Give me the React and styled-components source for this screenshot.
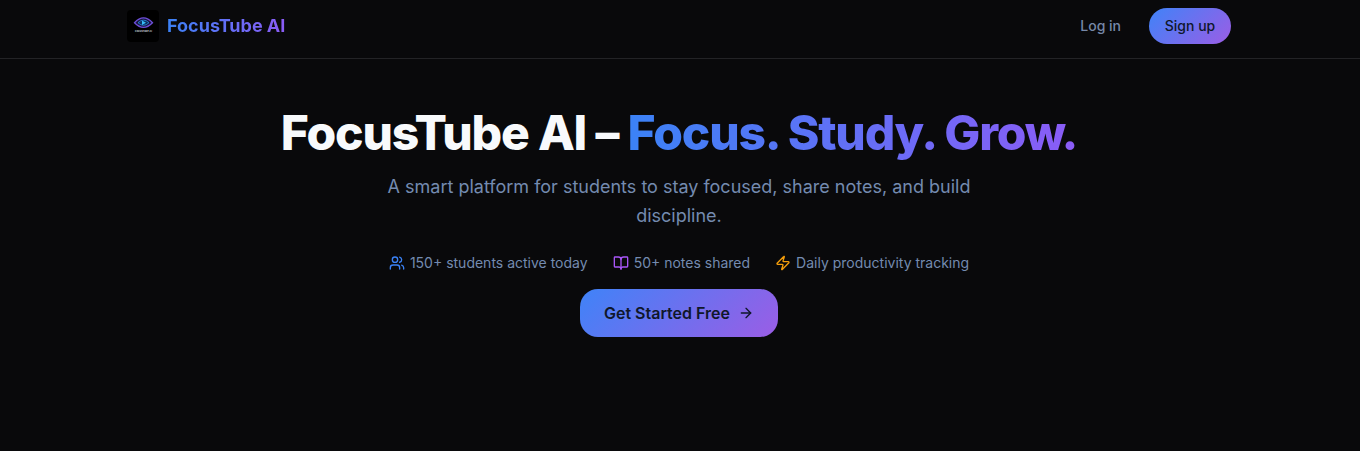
import styled, { createGlobalStyle } from "styled-components";
import { ArrowRight, BookOpen, Users, Zap } from "lucide-react";

const GRADIENT = "linear-gradient(135deg, #3f83f8, #9b5de5)";

const GlobalStyle = createGlobalStyle`
  * {
    box-sizing: border-box;
  }

  body {
    margin: 0;
    background: #09090b;
    font-family: "Inter", "Liberation Sans", sans-serif;
    color: #f8fafc;
  }
`;

const Page = styled.div`
  min-height: 451px;
  background: #09090b;
`;

const Navbar = styled.header`
  height: 59px;
  padding: 0 129px 7px 127px;
  display: flex;
  align-items: center;
  justify-content: space-between;
  border-bottom: 1px solid #232326;
`;

const Brand = styled.div`
  display: flex;
  align-items: center;
  gap: 8px;
`;

const LogoBox = styled.div`
  width: 32px;
  height: 32px;
  border-radius: 4px;
  background: #000;
  display: flex;
`;

const BrandName = styled.span`
  font-size: 18px;
  font-weight: 700;
  background: linear-gradient(90deg, #3b82f6, #8b5cf6);
  -webkit-background-clip: text;
  background-clip: text;
  color: transparent;
`;

const NavActions = styled.nav`
  display: flex;
  align-items: center;
  gap: 16px;
`;

const LoginButton = styled.button`
  height: 36px;
  padding: 0 12px 0 13px;
  border: 0;
  background: transparent;
  font: 500 14px "Inter", sans-serif;
  color: #7688a8;
`;

const SignupButton = styled.button`
  width: 82px;
  height: 36px;
  border: 0;
  border-radius: 18px;
  background: ${GRADIENT};
  font: 500 14px "Inter", sans-serif;
  color: #0f172a;
`;

const Hero = styled.main`
  display: flex;
  flex-direction: column;
  align-items: center;
  padding: 44px 2px 0 0;
`;

const Title = styled.h1`
  margin: 0;
  font-size: 48px;
  line-height: 60px;
  font-weight: 800;
  letter-spacing: -1.2px;
  text-align: center;
  color: #f8fafc;
`;

const TitleAccent = styled.span`
  background: linear-gradient(90deg, #3b82f6, #8b5cf6);
  -webkit-background-clip: text;
  background-clip: text;
  color: transparent;
`;

const Subtitle = styled.p`
  width: 640px;
  margin: 9px 0 0;
  font-size: 18px;
  line-height: 29px;
  text-align: center;
  color: #748bb0;
`;

const Stats = styled.ul`
  margin: 23px 0 0;
  padding: 0;
  list-style: none;
  display: flex;
  gap: 25px;
`;

const Stat = styled.li`
  display: flex;
  align-items: center;
  gap: 5px;
  font-size: 14px;
  line-height: 20px;
  color: #748bb0;
  svg {
    color: ${(props) => props.$iconColor};
  }
`;

const CtaButton = styled.button`
  margin-top: 16px;
  width: 198px;
  height: 48px;
  border: 0;
  border-radius: 18px;
  display: flex;
  align-items: center;
  justify-content: center;
  gap: 8px;
  background: ${GRADIENT};
  font: 600 16px "Inter", sans-serif;
  color: #0f172a;
`;

const LogoCaption = styled.text`
  font-family: "Inter", sans-serif;
  font-size: 2.6px;
  font-weight: 700;
  fill: #c7ccd6;
`;

function Logo() {
  return (
    <LogoBox>
      <svg width="32" height="32" viewBox="0 0 32 32" fill="none">
        <path d="M7.5 12.7 Q16.5 3 25.5 12.7 Q16.5 22 7.5 12.7Z" fill="#1a1440" stroke="#6d4fd8" strokeWidth="1.3" />
        <path d="M11 12.7 Q16.5 7.5 22 12.7 Q16.5 18 11 12.7Z" fill="#0c2f5e" stroke="#2a8fe0" strokeWidth="0.8" />
        <path d="M15 10.4 L19 12.7 L15 15Z" fill="#38bdf8" />
        <LogoCaption x="16.5" y="21.8" textAnchor="middle">FocusTube AI</LogoCaption>
      </svg>
    </LogoBox>
  );
}

export default function App() {
  return (
    <Page>
      <GlobalStyle />
      <Navbar>
        <Brand>
          <Logo />
          <BrandName>FocusTube AI</BrandName>
        </Brand>
        <NavActions>
          <LoginButton>Log in</LoginButton>
          <SignupButton>Sign up</SignupButton>
        </NavActions>
      </Navbar>
      <Hero>
        <Title>
          FocusTube AI – <TitleAccent>Focus. Study. Grow.</TitleAccent>
        </Title>
        <Subtitle>A smart platform for students to stay focused, share notes, and build discipline.</Subtitle>
        <Stats>
          <Stat $iconColor="#3b82f6">
            <Users size={16} />
            150+ students active today
          </Stat>
          <Stat $iconColor="#a855f7">
            <BookOpen size={16} />
            50+ notes shared
          </Stat>
          <Stat $iconColor="#f59e0b">
            <Zap size={16} />
            Daily productivity tracking
          </Stat>
        </Stats>
        <CtaButton>
          Get Started Free
          <ArrowRight size={16} />
        </CtaButton>
      </Hero>
    </Page>
  );
}
